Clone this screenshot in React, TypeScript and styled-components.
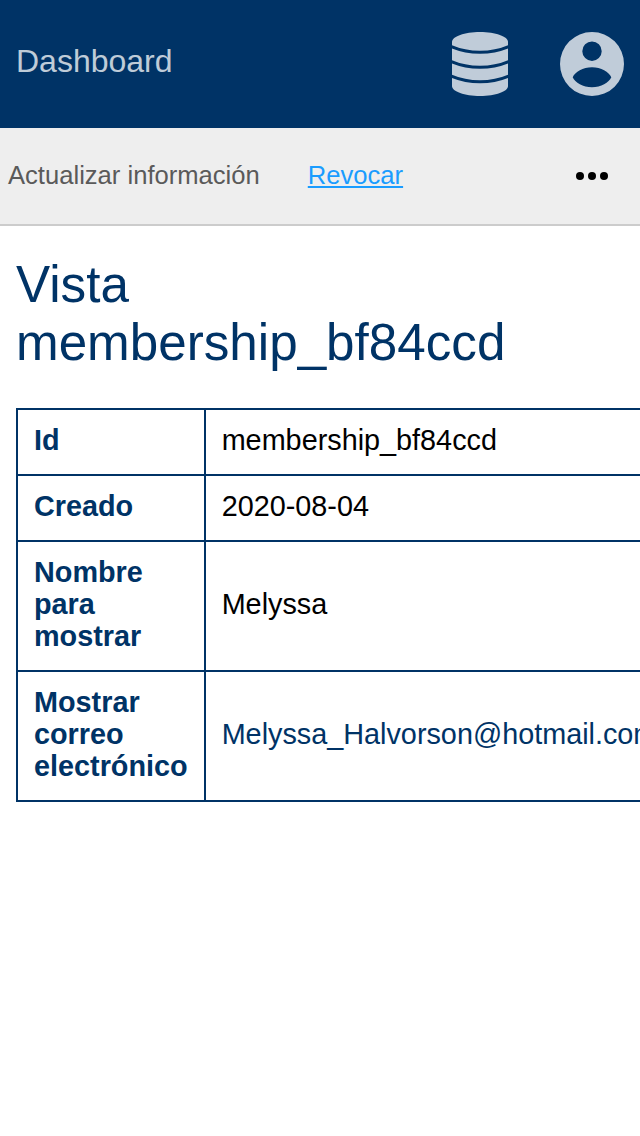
import styled, { createGlobalStyle } from "styled-components";

const navy = "#003366";

const GlobalStyle = createGlobalStyle`
  html, body {
    margin: 0;
    padding: 0;
    background: #fff;
    font-family: "Liberation Sans", Arial, sans-serif;
    overflow-x: hidden;
  }
`;

const Header = styled.header`
  height: 128px;
  background-color: ${navy};
  display: flex;
  align-items: center;
  padding: 0 16px;
  box-sizing: border-box;
`;

const Brand = styled.span`
  flex: 1;
  font-size: 32px;
  color: rgba(255, 255, 255, 0.75);
  margin-top: -6px;
`;

const HeaderIcons = styled.div`
  display: flex;
  align-items: center;
  gap: 52px;
  color: #c0ccd9;

  svg {
    display: block;
  }
`;

const Toolbar = styled.nav`
  height: 98px;
  box-sizing: border-box;
  background-color: #eeeeee;
  border-bottom: 2px solid #cccccc;
  display: flex;
  align-items: center;
  padding: 0 32px 2px 8px;
  font-size: 25.6px;
`;

const ToolText = styled.span`
  color: #5a5a5a;
  margin-right: 48px;
`;

const ToolLink = styled.a`
  color: #1a9cff;
  text-decoration: underline;
  flex: 1;
`;

const MoreSvg = styled.svg`
  margin-top: 2px;
`;

const Main = styled.main`
  padding: 30px 16px 0;
  overflow: hidden;
`;

const Title = styled.h1`
  margin: 0 0 36px;
  font-size: 51.2px;
  line-height: 58px;
  font-weight: 400;
  color: ${navy};
`;

const DetailTable = styled.table`
  border-collapse: collapse;
  font-size: 28.8px;
  line-height: 32px;
  border: 2px solid ${navy};
`;

const Label = styled.th`
  padding: 14px 16px 18px;
  border: 2px solid ${navy};
  color: ${navy};
  font-weight: 700;
  text-align: left;
`;

const Value = styled.td<{ $link?: boolean }>`
  padding: 14px 16px 18px;
  border: 2px solid ${navy};
  color: ${(props) => (props.$link ? navy : "#000")};
`;

const rows = [
  { label: "Id", value: "membership_bf84ccd" },
  { label: "Creado", value: "2020-08-04" },
  { label: "Nombre para mostrar", value: "Melyssa" },
  { label: "Mostrar correo electrónico", value: "Melyssa_Halvorson@hotmail.com", link: true },
];

const DatabaseIcon = () => (
  <svg width="56" height="64" viewBox="0 0 56 64" aria-hidden="true">
    <path
      fill="currentColor"
      d="M0 10C0 4.500 12.500 0 28 0S56 4.500 56 10V54C56 59.500 43.500 64 28 64S0 59.500 0 54Z"
    />
    <g fill="none" stroke={navy} strokeWidth="3">
      <path d="M-1 14.500C8 18.500 18 20.300 28 20.300S48 18.500 57 14.500" />
      <path d="M-1 29.500C8 33.500 18 35.300 28 35.300S48 33.500 57 29.500" />
      <path d="M-1 44C8 48 18 49.800 28 49.800S48 48 57 44" />
    </g>
  </svg>
);

const UserIcon = () => (
  <svg width="64" height="64" viewBox="0 0 64 64" aria-hidden="true">
    <path
      fill="currentColor"
      fillRule="evenodd"
      d="M32 0a32 32 0 1 1 0 64a32 32 0 1 1 0-64ZM32 9.500a9.700 9.700 0 1 0 0 19.400a9.700 9.700 0 1 0 0-19.400ZM12.700 45.300C15 40 23 35.300 32 35.300S49 40 51.300 45.300C49 50.500 41 55.300 32 55.300S15 50.500 12.700 45.300Z"
    />
  </svg>
);

const MoreIcon = () => (
  <MoreSvg width="32" height="8" viewBox="0 0 32 8" aria-hidden="true">
    <circle cx="4" cy="4" r="4" />
    <circle cx="16" cy="4" r="4" />
    <circle cx="28" cy="4" r="4" />
  </MoreSvg>
);

export default function App() {
  return (
    <>
      <GlobalStyle />
      <Header>
        <Brand>Dashboard</Brand>
        <HeaderIcons>
          <DatabaseIcon />
          <UserIcon />
        </HeaderIcons>
      </Header>
      <Toolbar>
        <ToolText>Actualizar información</ToolText>
        <ToolLink href="#">Revocar</ToolLink>
        <MoreIcon />
      </Toolbar>
      <Main>
        <Title>Vista membership_bf84ccd</Title>
        <DetailTable>
          <tbody>
            {rows.map((row) => (
              <tr key={row.label}>
                <Label>{row.label}</Label>
                <Value $link={row.link}>{row.value}</Value>
              </tr>
            ))}
          </tbody>
        </DetailTable>
      </Main>
    </>
  );
}
